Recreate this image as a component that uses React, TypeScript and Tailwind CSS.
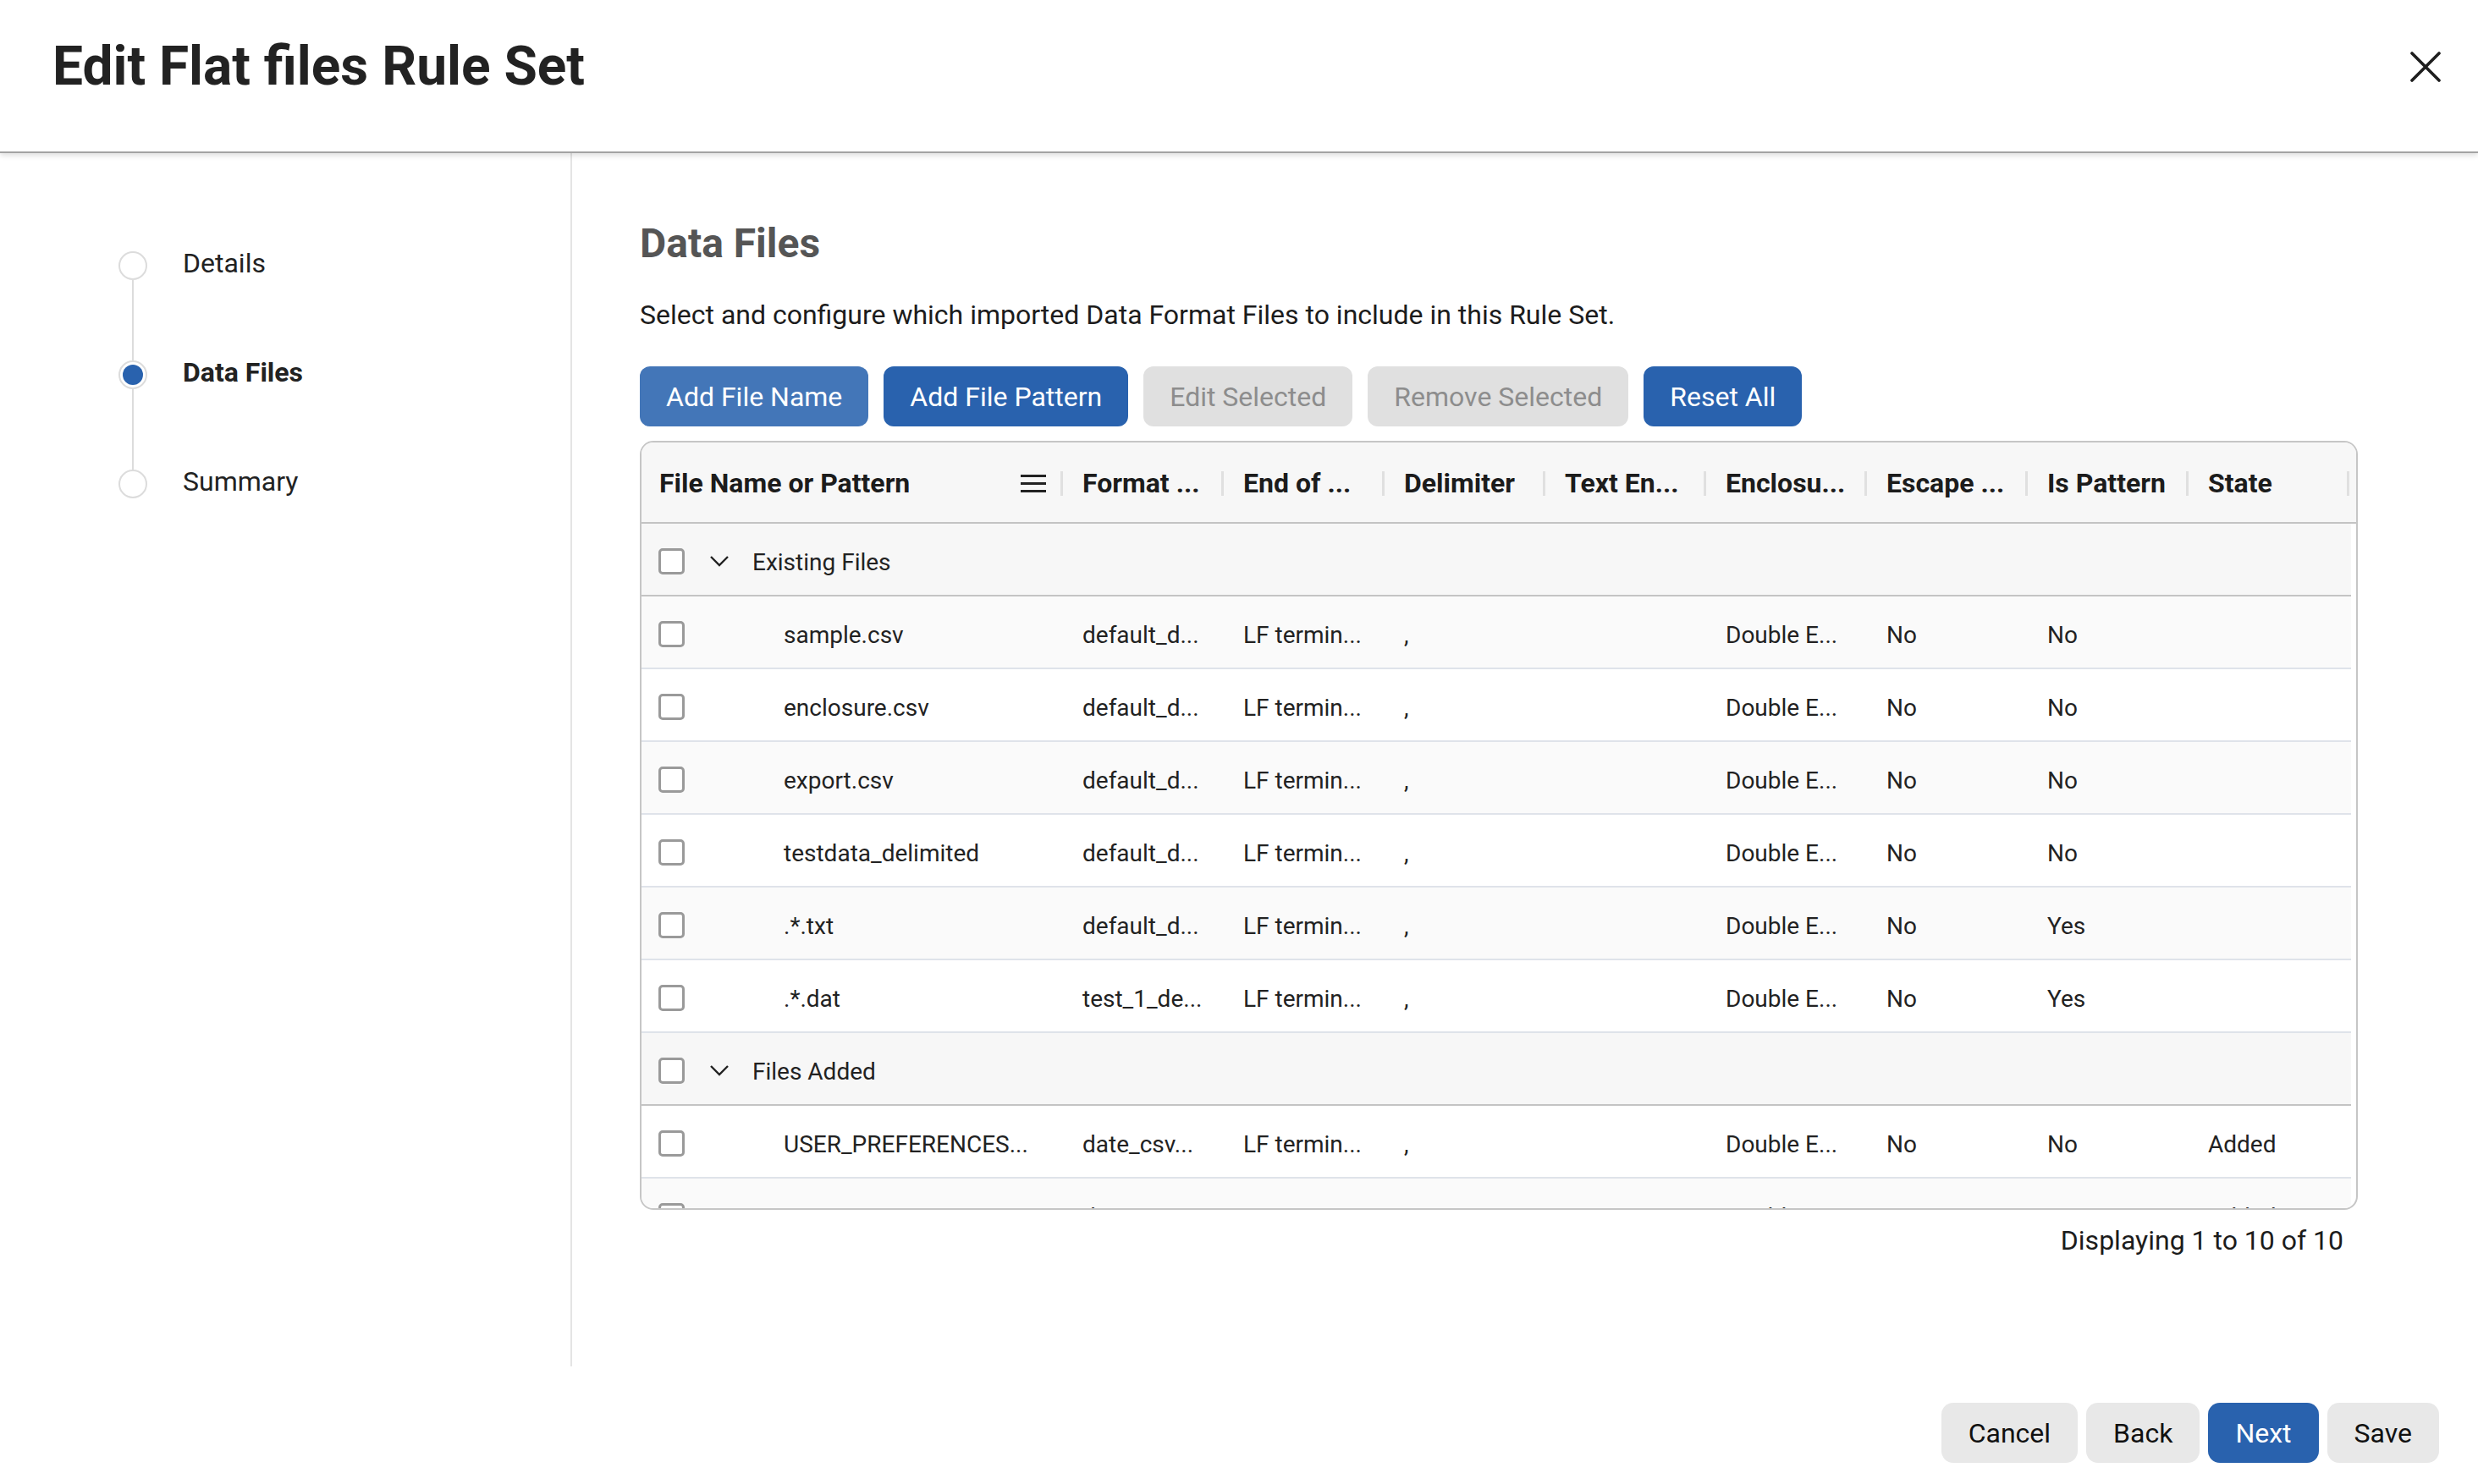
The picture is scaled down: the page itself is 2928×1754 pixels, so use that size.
import React from "react";

type FileRow = {
  name: string;
  format: string;
  eol: string;
  delimiter: string;
  enclosure: string;
  escape: string;
  isPattern: string;
  state: string;
};

type Group = {
  label: string;
  files: FileRow[];
};

const base = {
  format: "default_d...",
  eol: "LF termin...",
  delimiter: ",",
  enclosure: "Double E...",
  escape: "No",
  isPattern: "No",
  state: "",
};

const groups: Group[] = [
  {
    label: "Existing Files",
    files: [
      { ...base, name: "sample.csv" },
      { ...base, name: "enclosure.csv" },
      { ...base, name: "export.csv" },
      { ...base, name: "testdata_delimited" },
      { ...base, name: ".*.txt", isPattern: "Yes" },
      { ...base, name: ".*.dat", format: "test_1_de...", isPattern: "Yes" },
    ],
  },
  {
    label: "Files Added",
    files: [
      { ...base, name: "USER_PREFERENCES...", format: "date_csv...", state: "Added" },
      { ...base, name: "stores.csv", format: "date_csv...", state: "Added" },
    ],
  },
];

const columns = [
  "Format ...",
  "End of ...",
  "Delimiter",
  "Text En...",
  "Enclosu...",
  "Escape ...",
  "Is Pattern",
  "State",
];

const steps = [
  { label: "Details", active: false },
  { label: "Data Files", active: true },
  { label: "Summary", active: false },
];

const Checkbox = () => (
  <div className="w-[31px] h-[31px] shrink-0 rounded-[5px] border-[3px] border-[#9a9a9a] bg-white" />
);

const Chevron = () => (
  <svg width="24" height="15" viewBox="0 0 24 15" className="shrink-0">
    <path d="M2 2 L12 12 L22 2" fill="none" stroke="#222" strokeWidth="2.4" />
  </svg>
);

const Stepper = () => (
  <div className="flex flex-col pl-[140px] pt-[116px]">
    {steps.map((step, i) => (
      <div key={i} className="flex flex-col">
        <div className="flex items-center gap-[42px]">
          <div className="w-[34px] h-[34px] rounded-full border-2 border-[#dcdcdc] bg-white flex items-center justify-center">
            {step.active && <div className="w-[24px] h-[24px] rounded-full bg-[#2962ae]" />}
          </div>
          <span
            className={`-mt-[6px] text-[32px] leading-none text-[#222] ${step.active ? "font-bold" : ""}`}
          >
            {step.label}
          </span>
        </div>
        {i < steps.length - 1 && (
          <div className="w-[34px] flex justify-center">
            <div className="w-[2px] h-[95px] bg-[#dcdcdc]" />
          </div>
        )}
      </div>
    ))}
  </div>
);

const DataTable = () => {
  let rowIndex = 0;

  return (
    <div className="w-[2030px] h-[909px] mt-[17px] rounded-[16px] border-2 border-[#c6c6c6] overflow-hidden bg-white">
      <div className="h-[96px] pt-[2px] bg-[#f7f7f7] border-b-2 border-[#c4c4c4] flex items-center">
        <div className="w-[500px] h-full flex items-center pl-[21px] pr-[2px]">
          <span className="text-[32px] font-bold text-[#1c1c1c]">File Name or Pattern</span>
          <div className="ml-auto flex flex-col gap-[6px] mr-[17px]">
            <div className="w-[30px] h-[3px] bg-[#222]" />
            <div className="w-[30px] h-[3px] bg-[#222]" />
            <div className="w-[30px] h-[3px] bg-[#222]" />
          </div>
          <div className="w-[3px] h-[29px] bg-[#e0e0e0]" />
        </div>
        {columns.map((col) => (
          <div key={col} className="w-[190px] h-full flex items-center pl-[21px] pr-[2px]">
            <span className="text-[32px] font-bold text-[#1c1c1c] whitespace-nowrap">{col}</span>
            <div className="ml-auto w-[3px] h-[29px] bg-[#e0e0e0]" />
          </div>
        ))}
      </div>

      {groups.map((group) => {
        const groupRow = (
          <div
            key={group.label}
            className="w-[2020px] h-[86px] pt-[4px] bg-[#f7f7f7] border-b-2 border-[#c4c4c4] flex items-center pl-[20px] text-[28px] text-[#222]"
          >
            <Checkbox />
            <div className="ml-[29px]">
              <Chevron />
            </div>
            <span className="ml-[27px] pt-[4px]">{group.label}</span>
          </div>
        );
        rowIndex++;

        return (
          <React.Fragment key={group.label}>
            {groupRow}
            {group.files.map((file) => {
              const striped = rowIndex % 2 === 1;
              rowIndex++;
              return (
                <div
                  key={file.name}
                  className={`w-[2020px] h-[86px] pt-[4px] border-b-2 border-[#dfe3ea] flex items-center text-[28px] text-[#222] ${
                    striped ? "bg-[#fafafa]" : "bg-white"
                  }`}
                >
                  <div className="w-[500px] flex items-center pl-[20px]">
                    <Checkbox />
                    <span className="ml-[117px] pt-[4px] whitespace-nowrap">{file.name}</span>
                  </div>
                  {[
                    file.format,
                    file.eol,
                    file.delimiter,
                    "",
                    file.enclosure,
                    file.escape,
                    file.isPattern,
                    file.state,
                  ].map((v, j) => (
                    <div key={j} className="w-[190px] pl-[21px] pt-[4px] whitespace-nowrap">
                      {v}
                    </div>
                  ))}
                </div>
              );
            })}
          </React.Fragment>
        );
      })}
    </div>
  );
};

const App = () => {
  return (
    <div className="w-[2928px] h-[1754px] bg-white flex flex-col font-['Roboto',sans-serif] overflow-hidden">
      <header className="relative z-10 h-[181px] shrink-0 flex items-start justify-between pl-[62px] pr-[44px] border-b-2 border-[#a3a3a3] shadow-[0_3px_6px_rgba(0,0,0,0.12)] bg-white">
        <h1 className="pt-[47px] text-[64px] leading-none font-bold text-[#222]">
          Edit Flat files Rule Set
        </h1>
        <button className="mt-[61px] w-[36px] h-[36px]">
          <svg width="36" height="36" viewBox="0 0 36 36">
            <path
              d="M2 2 L34 34 M34 2 L2 34"
              stroke="#1e1e1e"
              strokeWidth="3.6"
              strokeLinecap="round"
            />
          </svg>
        </button>
      </header>

      <div className="flex h-[1434px] shrink-0">
        <aside className="w-[676px] shrink-0 border-r-2 border-[#e4e4e4]">
          <Stepper />
        </aside>

        <main className="flex-1 pl-[80px] pt-[83px]">
          <h2 className="text-[48px] leading-none font-bold text-[#555]">Data Files</h2>
          <p className="mt-[44px] text-[32px] leading-none text-[#1c1c1c]">
            Select and configure which imported Data Format Files to include in this Rule Set.
          </p>

          <div className="mt-[45px] flex gap-[18px]">
            <button className="h-[71px] px-[31px] rounded-[12px] bg-[#4376b8] text-white text-[32px]">
              Add File Name
            </button>
            <button className="h-[71px] px-[31px] rounded-[12px] bg-[#2962ae] text-white text-[32px]">
              Add File Pattern
            </button>
            <button className="h-[71px] px-[31px] rounded-[12px] bg-[#e0e0e0] text-[#8d8d8d] text-[32px]">
              Edit Selected
            </button>
            <button className="h-[71px] px-[31px] rounded-[12px] bg-[#e0e0e0] text-[#8d8d8d] text-[32px]">
              Remove Selected
            </button>
            <button className="h-[71px] px-[31px] rounded-[12px] bg-[#2962ae] text-white text-[32px]">
              Reset All
            </button>
          </div>

          <DataTable />

          <div className="w-[2030px] mt-[20px] pr-[17px] flex justify-end">
            <span className="text-[32px] leading-none text-[#1c1c1c]">Displaying 1 to 10 of 10</span>
          </div>
        </main>
      </div>

      <footer className="flex justify-end gap-[10px] pr-[46px] pt-[43px]">
        <button className="h-[71px] px-[32px] rounded-[14px] bg-[#e8e8e8] text-[#111] text-[32px]">
          Cancel
        </button>
        <button className="h-[71px] px-[32px] rounded-[14px] bg-[#e8e8e8] text-[#111] text-[32px]">
          Back
        </button>
        <button className="h-[71px] px-[32px] rounded-[14px] bg-[#2962ae] text-white text-[32px]">
          Next
        </button>
        <button className="h-[71px] px-[32px] rounded-[14px] bg-[#e8e8e8] text-[#111] text-[32px]">
          Save
        </button>
      </footer>
    </div>
  );
};

export default App;
